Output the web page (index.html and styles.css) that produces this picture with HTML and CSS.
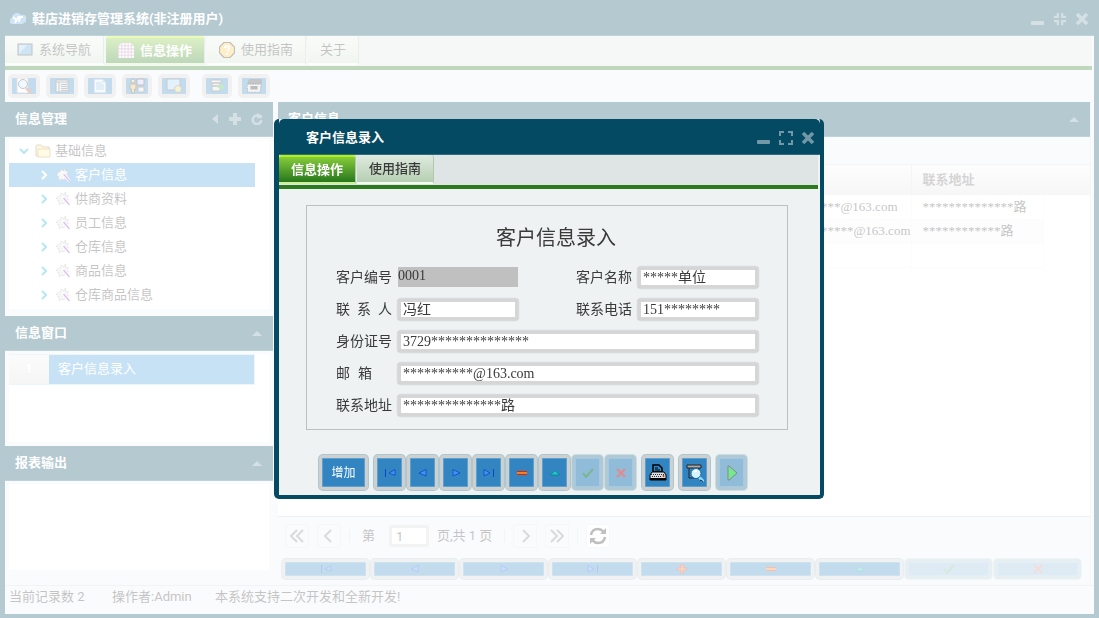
FILE: index.html
```html
<!DOCTYPE html>
<html lang="zh-CN">
<head>
    <meta charset="UTF-8">
    <meta name="viewport" content="width=device-width, initial-scale=1.0">
    <title>鞋店进销存管理系统</title>
    <link rel="stylesheet" href="styles.css">
</head>
<body>
    <!-- 图标 -->
    <svg class="sprite" aria-hidden="true">
        <symbol id="i-min" viewBox="0 0 14 14"><rect x="0" y="9" width="13" height="4" rx="1" fill="currentColor"/></symbol>
        <symbol id="i-max" viewBox="0 0 14 14"><path d="M1 5V1h4M9 1h4v4M13 9v4H9M5 13H1V9" fill="none" stroke="currentColor" stroke-width="2"/></symbol>
        <symbol id="i-restore" viewBox="0 0 16 16"><path d="M1 5.500H5.500V1M10.500 1v4.500H15M15 10.500h-4.500V15M5.500 15v-4.500H1" fill="none" stroke="currentColor" stroke-width="2.500"/></symbol>
        <symbol id="i-close" viewBox="0 0 14 14"><path d="M2 2l10 10M12 2L2 12" stroke="currentColor" stroke-width="3.500"/></symbol>
        <symbol id="i-up" viewBox="0 0 10 6"><path d="M0 6l5-5 5 5z" fill="currentColor"/></symbol>
        <symbol id="i-left" viewBox="0 0 7 12"><path d="M6 1v10L0 6z" fill="currentColor"/></symbol>
        <symbol id="i-plus" viewBox="0 0 12 12"><path d="M6 0v12M0 6h12" stroke="currentColor" stroke-width="4"/></symbol>
        <symbol id="i-reload" viewBox="0 0 14 14"><path d="M12 8A5 5 0 1 1 8 3" fill="none" stroke="currentColor" stroke-width="3"/><path d="M7 0l6 3v3H7z" fill="currentColor"/></symbol>
        <symbol id="i-chev" viewBox="0 0 6 10"><path d="M1 1l4 4-4 4" fill="none" stroke="currentColor" stroke-width="2"/></symbol>
        <symbol id="i-chevdown" viewBox="0 0 10 6"><path d="M1 1l4 4 4-4" fill="none" stroke="currentColor" stroke-width="2"/></symbol>
        <symbol id="i-folder" viewBox="0 0 16 14"><path d="M1 12V2l1-1h4l2 2h6v9z" fill="#fbe49a" stroke="#a98630"/><path d="M3 13V5h12v8z" fill="#fff0a8" stroke="#c19a3c"/></symbol>
        <symbol id="i-wand" viewBox="0 0 14 14"><path d="M0 6l4-3 1-2 2 2 2-3v3l3 1-2 2 2 2-2 1 2 2-3-1-2 2-2-1-2 2-1-4z" fill="#e4e4e4" stroke="#777" stroke-width=".7" stroke-dasharray="2 1"/><path d="M6 5l7 8" stroke="#fff" stroke-width="3"/><path d="M7 6l6 7" stroke="#9a32cc" stroke-width="1.500"/></symbol>
        <symbol id="i-logo" viewBox="0 0 16 12"><path d="M3 11a3 3 0 0 1-1-6 5 5 0 0 1 9-3 4 4 0 0 1 3 8q-2 2-5 1z" fill="#58a8dc"/><path d="M3 4l3 3M9 3L5 10M9 9l1-5h3" fill="none" stroke="#fff" stroke-width="1.800"/></symbol>
        <symbol id="i-screen" viewBox="0 0 16 14"><rect x="1" y="1" width="14" height="11" fill="#5ca8dc" stroke="#333"/><path d="M2 11V2h8z" fill="#9dd0f0"/></symbol>
        <symbol id="i-grid" viewBox="0 0 15 15"><path d="M3 0h9l3 3v11H0V3z" fill="#fff"/><path d="M.5 2v12M3.500 0v14M6.500 0v14M9.500 0v14M12.500 0v14M0 2.500h15M0 5.500h15M0 8.500h15M0 11.500h15" stroke="#b989b8"/></symbol>
        <symbol id="i-help" viewBox="0 0 16 16"><path d="M5 .5h6L15.500 5v6L11 15.500H5L.5 11V5z" fill="#ffc84c" stroke="#442208" stroke-width="1.200"/><path d="M6 6q0-2 2-2t2 2-2 3M8 11v2" fill="none" stroke="#fff" stroke-width="2"/></symbol>
        <symbol id="i-search" viewBox="0 0 16 16"><path d="M1 0h11v15H1z" fill="#fff" stroke="#999"/><circle cx="7" cy="6" r="4.500" fill="#c8ecff" stroke="#444"/><path d="M10 10l5 5" stroke="#c8552c" stroke-width="2.500"/></symbol>
        <symbol id="i-form" viewBox="0 0 16 16"><path d="M2 2h12v12H2z" fill="#d8e4ee" stroke="#555"/><path d="M2 4h12M5 4v10M7 6.500h6M7 8.500h6M7 10.500h6M7 12.500h6" stroke="#555"/></symbol>
        <symbol id="i-page" viewBox="0 0 16 16"><path d="M2 1h9l3 3v11H2z" fill="#e0f2ff" stroke="#5b88b0"/><path d="M4 5h6M4 7h8M4 9h8M4 11h8M11 1v3h3" fill="none" stroke="#5b9dc8"/></symbol>
        <symbol id="i-users" viewBox="0 0 16 16"><circle cx="4" cy="3" r="2" fill="#ffd07a" stroke="#333"/><path d="M1 6h6v5H5.500v4h-3v-4H1z" fill="#e8b050" stroke="#443"/><path d="M8 1h7v6H8z" fill="#ccc4ff" stroke="#333"/><path d="M9 9h6v5H9z" fill="#ddd" stroke="#555"/></symbol>
        <symbol id="i-drop" viewBox="0 0 16 16"><path d="M1 1h13v11H1z" fill="#9ed0ee" stroke="#555"/><circle cx="12" cy="11" r="3.500" fill="#c8e070" stroke="#a05a68"/></symbol>
        <symbol id="i-dbadd" viewBox="0 0 16 16"><path d="M2 2h10v3H2zM3 5h8v3H3zM3 8h8v5H3z" fill="#d8e0e4" stroke="#555"/><path d="M12 6v6M9 9h6" stroke="#3cb53c" stroke-width="2"/></symbol>
        <symbol id="i-print2" viewBox="0 0 18 16"><path d="M4 1h13v4H2z" fill="#444" stroke="#222"/><path d="M1 6h16l-1 9H2z" fill="#ddd" stroke="#222" stroke-dasharray="2 1"/><path d="M5 10h8" stroke="#222" stroke-width="4"/></symbol>
        <symbol id="n-first" viewBox="0 0 12 10"><path d="M1.500 1v8" stroke="#0d47c0"/><path d="M11 1.500v6L5 5z" fill="#3c94f8" stroke="#0d47c0" stroke-width=".8"/></symbol>
        <symbol id="n-prev" viewBox="0 0 12 10"><path d="M9 1.500v6.500L2 5z" fill="#3c94f8" stroke="#0d47c0" stroke-width=".8"/></symbol>
        <symbol id="n-next" viewBox="0 0 12 10"><path d="M3 1.500v6.500L10 5z" fill="#3c94f8" stroke="#0d47c0" stroke-width=".8"/></symbol>
        <symbol id="n-last" viewBox="0 0 12 10"><path d="M10.500 1v8" stroke="#0d47c0"/><path d="M1 1.500v6.500L7 5z" fill="#3c94f8" stroke="#0d47c0" stroke-width=".8"/></symbol>
        <symbol id="n-add" viewBox="0 0 12 10"><path d="M6 0v10M1 5h10" stroke="#e02a00" stroke-width="3"/><path d="M6 1v8M2 5h8" stroke="#ff8a50"/></symbol>
        <symbol id="n-del" viewBox="0 0 12 10"><path d="M1 3.500h10M1 6.500h10" stroke="#d42a00"/><path d="M1 5h10" stroke="#ff7a20" stroke-width="2"/></symbol>
        <symbol id="n-edit" viewBox="0 0 12 10"><path d="M1.500 7L6 2.500 10.500 7z" fill="#28c8d0" stroke="#078a96"/></symbol>
        <symbol id="n-ok" viewBox="0 0 12 10"><path d="M1 5l3 4 7-8" fill="none" stroke="#087a28" stroke-width="2"/></symbol>
        <symbol id="n-cancel" viewBox="0 0 12 10"><path d="M2 1l8 8M10 1L2 9" stroke="#dc2020" stroke-width="2"/></symbol>
        <symbol id="i-printer" viewBox="0 0 18 18"><path d="M4 8V1h6l3 3v4z" fill="#3285c1" stroke="#000" stroke-width="1.500"/><path d="M6 4h3M6 6h5" stroke="#000"/><path d="M3 8h12l2 3v5H1v-5z" fill="#ddd" stroke="#000"/><path d="M2 10.500h14M3 12.500h10" stroke="#234" stroke-dasharray="1 1"/><path d="M1 15h16" stroke="#000" stroke-width="2"/><circle cx="14.500" cy="12" r="1" fill="#e02020"/></symbol>
        <symbol id="i-preview" viewBox="0 0 18 18"><path d="M1 1h14v3H1z" fill="#aaa" stroke="#222"/><path d="M3 4v10h9M13 4v2" fill="none" stroke="#222"/><circle cx="10" cy="9.500" r="5" fill="#d4f4ff" stroke="#1c6ca8"/><path d="M8 8l3-2" stroke="#fff" stroke-width="2"/><path d="M13.500 13.500l4 4" stroke="#8edcff" stroke-width="3"/><path d="M14 16l3 1.500" stroke="#113"/></symbol>
        <symbol id="i-play" viewBox="0 0 18 18"><path d="M5 2v14h1l8-7-8-7z" fill="#00e020" stroke="#123"/></symbol>
        <symbol id="p-one" viewBox="0 0 14 14"><path d="M9 1L3 7l6 6" fill="none" stroke="currentColor" stroke-width="2"/></symbol>
        <symbol id="p-two" viewBox="0 0 14 14"><path d="M7 1L1 7l6 6M13 1L7 7l6 6" fill="none" stroke="currentColor" stroke-width="2"/></symbol>
        <symbol id="p-refresh" viewBox="0 0 18 18"><path d="M2 8q1-6 7-6 3 0 6 3M16 10q-1 6-7 6-3 0-6-3" fill="none" stroke="currentColor" stroke-width="2.500"/><path d="M17 1v6h-6zM1 17v-6h6z" fill="currentColor"/></symbol>
    </svg>

    <div class="window main-window">
        <header class="window-header">
            <svg class="logo"><use href="#i-logo"/></svg>
            <h1>鞋店进销存管理系统(非注册用户)</h1>
            <div class="window-tools">
                <button aria-label="最小化"><svg><use href="#i-min"/></svg></button>
                <button aria-label="还原"><svg><use href="#i-restore"/></svg></button>
                <button aria-label="关闭"><svg><use href="#i-close"/></svg></button>
            </div>
        </header>
        <nav class="tabs">
            <button class="tab"><svg><use href="#i-screen"/></svg>系统导航</button>
            <button class="tab active"><svg><use href="#i-grid"/></svg>信息操作</button>
            <button class="tab"><svg><use href="#i-help"/></svg>使用指南</button>
            <button class="tab">关于</button>
        </nav>
        <div class="toolbar">
            <button class="btn" aria-label="查询"><svg><use href="#i-search"/></svg></button>
            <button class="btn" aria-label="表单"><svg><use href="#i-form"/></svg></button>
            <button class="btn" aria-label="页面"><svg><use href="#i-page"/></svg></button>
            <button class="btn narrow" aria-label="用户"><svg><use href="#i-users"/></svg></button>
            <button class="btn" aria-label="界面"><svg><use href="#i-drop"/></svg></button>
            <button class="btn narrow group" aria-label="数据"><svg><use href="#i-dbadd"/></svg></button>
            <button class="btn" aria-label="打印"><svg><use href="#i-print2"/></svg></button>
        </div>

        <div class="layout">
            <aside class="sidebar">
                <section class="panel tree-panel">
                    <div class="panel-header">
                        <h2>信息管理</h2>
                        <div class="panel-tools">
                            <svg class="t-left"><use href="#i-left"/></svg>
                            <svg><use href="#i-plus"/></svg>
                            <svg><use href="#i-reload"/></svg>
                        </div>
                    </div>
                    <ul class="tree">
                        <li class="root"><svg class="arrow"><use href="#i-chevdown"/></svg><svg class="node"><use href="#i-folder"/></svg>基础信息</li>
                        <li class="selected"><svg class="arrow"><use href="#i-chev"/></svg><svg class="node"><use href="#i-wand"/></svg>客户信息</li>
                        <li><svg class="arrow"><use href="#i-chev"/></svg><svg class="node"><use href="#i-wand"/></svg>供商资料</li>
                        <li><svg class="arrow"><use href="#i-chev"/></svg><svg class="node"><use href="#i-wand"/></svg>员工信息</li>
                        <li><svg class="arrow"><use href="#i-chev"/></svg><svg class="node"><use href="#i-wand"/></svg>仓库信息</li>
                        <li><svg class="arrow"><use href="#i-chev"/></svg><svg class="node"><use href="#i-wand"/></svg>商品信息</li>
                        <li><svg class="arrow"><use href="#i-chev"/></svg><svg class="node"><use href="#i-wand"/></svg>仓库商品信息</li>
                    </ul>
                </section>
                <section class="panel list-panel">
                    <div class="panel-header">
                        <h2>信息窗口</h2>
                        <svg class="t-up"><use href="#i-up"/></svg>
                    </div>
                    <div class="panel-body">
                        <div class="open-item"><span class="num">1</span><span class="name">客户信息录入</span></div>
                    </div>
                </section>
                <section class="panel report-panel">
                    <div class="panel-header">
                        <h2>报表输出</h2>
                        <svg class="t-up"><use href="#i-up"/></svg>
                    </div>
                    <div class="panel-body"></div>
                </section>
            </aside>

            <main class="content">
                <div class="panel-header">
                    <h2>客户信息</h2>
                    <svg class="t-up"><use href="#i-up"/></svg>
                </div>
                <div class="grid-area">
                    <table>
                        <thead>
                            <tr><th class="c-main"></th><th class="c-mail"></th><th class="c-addr" colspan="2">联系地址</th></tr>
                        </thead>
                        <tbody>
                            <tr><td></td><td>**********@163.com</td><td class="addr">**************路</td><td class="rest"></td></tr>
                            <tr><td></td><td>************@163.com</td><td class="addr">************路</td><td class="rest"></td></tr>
                            <tr><td></td><td></td><td class="addr"></td><td class="rest"></td></tr>
                        </tbody>
                    </table>
                </div>
                <div class="pager">
                    <button aria-label="首页"><svg><use href="#p-two"/></svg></button>
                    <button aria-label="上一页"><svg><use href="#p-one"/></svg></button>
                    <i class="sep"></i>
                    <label for="page">第</label>
                    <input id="page" type="text" value="1">
                    <span class="total">页,共 1 页</span>
                    <i class="sep"></i>
                    <button class="flip" aria-label="下一页"><svg><use href="#p-one"/></svg></button>
                    <button class="flip" aria-label="末页"><svg><use href="#p-two"/></svg></button>
                    <i class="sep"></i>
                    <button class="refresh" aria-label="刷新"><svg><use href="#p-refresh"/></svg></button>
                </div>
                <div class="record-bar">
                    <button class="btn" aria-label="首条"><svg><use href="#n-first"/></svg></button>
                    <button class="btn" aria-label="上一条"><svg><use href="#n-prev"/></svg></button>
                    <button class="btn" aria-label="下一条"><svg><use href="#n-next"/></svg></button>
                    <button class="btn" aria-label="末条"><svg><use href="#n-last"/></svg></button>
                    <button class="btn" aria-label="增加"><svg><use href="#n-add"/></svg></button>
                    <button class="btn" aria-label="删除"><svg><use href="#n-del"/></svg></button>
                    <button class="btn" aria-label="修改"><svg><use href="#n-edit"/></svg></button>
                    <button class="btn" aria-label="保存" disabled><svg><use href="#n-ok"/></svg></button>
                    <button class="btn" aria-label="取消" disabled><svg><use href="#n-cancel"/></svg></button>
                </div>
            </main>
        </div>

        <footer class="status">
            <span class="count">当前记录数 2</span>
            <span class="user">操作者:Admin</span>
            <span>本系统支持二次开发和全新开发!</span>
        </footer>
    </div>

    <div class="mask">
        <div class="window dialog" role="dialog" aria-labelledby="dialogTitle">
            <header class="window-header">
                <h2 id="dialogTitle">客户信息录入</h2>
                <div class="window-tools">
                    <button aria-label="最小化"><svg><use href="#i-min"/></svg></button>
                    <button aria-label="最大化"><svg><use href="#i-max"/></svg></button>
                    <button aria-label="关闭"><svg><use href="#i-close"/></svg></button>
                </div>
            </header>
            <nav class="tabs">
                <button class="tab active">信息操作</button>
                <button class="tab">使用指南</button>
            </nav>
            <form class="entry">
                <h3>客户信息录入</h3>
                <div class="fields">
                    <label for="code">客户编号</label>
                    <input id="code" type="text" value="0001" readonly>
                    <label for="name" class="second">客户名称</label>
                    <input id="name" type="text" value="*****单位">
                    <label for="contact" class="spread"><span>联</span><span>系</span><span>人</span></label>
                    <input id="contact" type="text" value="冯红">
                    <label for="phone" class="second">联系电话</label>
                    <input id="phone" type="text" value="151********">
                    <label for="idno">身份证号</label>
                    <input id="idno" class="wide" type="text" value="3729**************">
                    <label for="mail" class="pair"><span>邮</span><span>箱</span></label>
                    <input id="mail" class="wide" type="text" value="**********@163.com">
                    <label for="address">联系地址</label>
                    <input id="address" class="wide" type="text" value="**************路">
                </div>
            </form>
            <div class="actions">
                <button class="btn text">增加</button>
                <div class="nav-group">
                    <button class="btn" aria-label="首条"><svg><use href="#n-first"/></svg></button>
                    <button class="btn" aria-label="上一条"><svg><use href="#n-prev"/></svg></button>
                    <button class="btn" aria-label="下一条"><svg><use href="#n-next"/></svg></button>
                    <button class="btn" aria-label="末条"><svg><use href="#n-last"/></svg></button>
                    <button class="btn" aria-label="删除"><svg><use href="#n-del"/></svg></button>
                    <button class="btn" aria-label="修改"><svg><use href="#n-edit"/></svg></button>
                    <button class="btn" aria-label="保存" disabled><svg><use href="#n-ok"/></svg></button>
                    <button class="btn" aria-label="取消" disabled><svg><use href="#n-cancel"/></svg></button>
                </div>
                <button class="btn big" aria-label="打印"><svg><use href="#i-printer"/></svg></button>
                <button class="btn big" aria-label="预览"><svg><use href="#i-preview"/></svg></button>
                <button class="btn big" aria-label="执行" disabled><svg><use href="#i-play"/></svg></button>
            </div>
        </div>
    </div>
</body>
</html>
```
FILE: styles.css
```css
* {
    margin: 0;
    padding: 0;
    box-sizing: border-box;
}

body {
    font-family: Roboto, "Noto Sans CJK SC", sans-serif;
    font-size: 13px;
    line-height: 20px;
    color: #3a3a3a;
    background: #eef2f3;
}

button,
input {
    font: inherit;
    color: inherit;
}

button {
    border: none;
    background: none;
}

.sprite {
    position: absolute;
    width: 0;
    height: 0;
}

/* 窗口 */
.window {
    display: flex;
    flex-direction: column;
    background: #eef2f3;
    border: 5px solid #044a63;
    border-top: none;
}

.main-window {
    min-height: 100vh;
    border-bottom-width: 4px;
}

.window-header {
    display: flex;
    align-items: center;
    height: 36px;
    padding: 2px 2px 0 5px;
    background: #044a63;
    border-bottom: 1px solid #2d6c82;
    color: #fff;
}

.window-header h1,
.window-header h2 {
    font-size: 13px;
    font-weight: bold;
}

.logo {
    width: 16px;
    height: 12px;
    margin-right: 6px;
}

.window-tools {
    display: flex;
    gap: 8px;
    margin-left: auto;
    padding-right: 3px;
    color: #7297a7;
}

.window-tools button,
.window-tools svg {
    display: block;
    width: 14px;
    height: 14px;
}

/* 标签页 */
.tabs {
    display: flex;
    gap: 2px;
    height: 34px;
    margin-right: 2px;
    background: #dfe4e4;
    border-bottom: 4px solid #2b7a1e;
}

.tab {
    display: flex;
    align-items: center;
    height: 29px;
    padding: 0 12px;
    background: linear-gradient(#e0eadf, #b5cfb3);
    border-right: 1px solid #b0c8b0;
    border-bottom: 2px solid #f4faf2;
    border-radius: 3px 3px 0 0;
}

.tab svg {
    width: 16px;
    height: 16px;
    margin-right: 6px;
}

.tab.active {
    color: #fff;
    font-weight: bold;
    background: linear-gradient(#86cc3c, #27771c);
    border-top: 2px solid #b4f010;
    border-bottom-color: #d0f0a0;
}

.main-window .tab:not(.active) {
    background: linear-gradient(#eef3ec, #d0e0ce);
}

.dialog .tabs {
    gap: 1px;
}

.dialog .tab:not(.active) {
    font-weight: 500;
}

/* 按钮 */
.btn {
    display: flex;
    align-items: center;
    justify-content: center;
    background: #3285c1;
    border: 3px solid #cfcfcf;
    border-radius: 4px;
    box-shadow: 0 0 0 1px #a9c8d2, inset 0 0 0 1px #58a2d2;
}

.btn svg {
    width: 12px;
    height: 10px;
}

.btn:disabled {
    opacity: 0.5;
    border-color: #72a0b8;
}

.toolbar {
    display: flex;
    gap: 8px;
    padding: 5px 4px 5px;
}

.toolbar .btn {
    width: 30px;
    height: 22px;
    box-shadow: 0 0 0 1px #cfcfcf;
}

.toolbar .narrow {
    width: 28px;
}

.toolbar .group {
    margin-left: 6px;
}

.toolbar svg {
    flex: none;
    width: 16px;
    height: 16px;
}

/* 主体布局 */
.layout {
    display: flex;
    flex: 1;
    gap: 5px;
    padding-right: 3px;
    border-bottom: 1px solid #d4d8d9;
}

.sidebar {
    display: flex;
    flex-direction: column;
    width: 268px;
}

.panel-header {
    display: flex;
    align-items: center;
    justify-content: space-between;
    height: 35px;
    padding: 0 10px;
    background: #044a63;
    border-bottom: 1px solid #2d6c82;
    color: #fff;
}

.panel-header h2 {
    font-size: 13px;
    font-weight: bold;
}

.panel-tools {
    display: flex;
    align-items: center;
    gap: 10px;
    color: #7297a7;
}

.panel-tools svg {
    width: 12px;
    height: 12px;
}

.panel-tools .t-left {
    width: 7px;
}

.t-up {
    width: 10px;
    height: 6px;
    margin-right: 1px;
    color: #7297a7;
}

.tree {
    list-style: none;
    margin: 2px 4px 7px;
    padding-bottom: 2px;
    background: #fff;
}

.tree li {
    display: flex;
    align-items: center;
    height: 24px;
    margin-right: 14px;
    padding-left: 32px;
}

.tree .root {
    padding-left: 10px;
}

.tree .arrow {
    width: 6px;
    height: 10px;
    margin-right: 9px;
    color: #08b0e0;
}

.tree .root .arrow {
    width: 10px;
    height: 6px;
    margin-right: 6px;
}

.tree .node {
    width: 15px;
    height: 14px;
    margin-right: 4px;
}

.tree .root .node {
    width: 16px;
}

.tree .selected,
.tree .selected .arrow {
    color: #fff;
}

.tree .selected {
    background: #449ede;
}

.panel-body {
    margin: 3px 4px 4px;
    background: #fff;
}

.list-panel .panel-body {
    height: 88px;
}

.report-panel {
    display: flex;
    flex: 1;
    flex-direction: column;
}

.report-panel .panel-body {
    flex: 1;
    margin-bottom: 15px;
}

.open-item {
    display: flex;
    height: 31px;
    margin-right: 14px;
    line-height: 28px;
    color: #fff;
    background: #449ede;
    border: solid #c0e0f0;
    border-width: 1px 1px 1px 0;
}

.open-item .num {
    width: 40px;
    text-align: center;
    font-weight: bold;
    background: linear-gradient(#f2f2f2, #dedede);
}

.open-item .name {
    padding-left: 9px;
}

/* 数据表 */
.content {
    display: flex;
    flex: 1;
    flex-direction: column;
    min-width: 0;
    border-right: 1px solid #dde2e2;
}

.grid-area {
    flex: 1;
    margin-top: 27px;
    background: #fff;
    border-top: 1px solid #dcdcdc;
    border-bottom: 1px solid #ccd2d2;
}

table {
    width: 100%;
    border-collapse: collapse;
    font-family: "Liberation Serif", "Noto Sans CJK SC", serif;
}

th {
    height: 30px;
    padding-left: 11px;
    text-align: left;
    color: #707070;
    background: linear-gradient(#f8f8f8, #e2e2e2);
    border-right: 1px solid #dcdcdc;
}

th:last-child {
    border-right: none;
}

td {
    height: 24px;
    padding-left: 11px;
    line-height: 16px;
    white-space: nowrap;
    border-right: 1px solid #f6f6f6;
    border-bottom: 1px solid #f4f4f4;
}

tbody tr:nth-child(2) td {
    background: #f8f8f8;
}

tbody tr td.rest {
    width: 47px;
    background: #fff;
    border: none;
}

.c-mail {
    width: 146px;
}

.addr {
    width: 132px;
}

.pager {
    display: flex;
    align-items: center;
    height: 38px;
    padding-left: 7px;
    gap: 8px;
}

.pager button {
    display: flex;
    align-items: center;
    justify-content: center;
    width: 24px;
    height: 24px;
    color: #848484;
    border: 1px solid #e2e6e6;
    border-radius: 3px;
}

.pager svg {
    width: 14px;
    height: 14px;
}

.pager .flip svg {
    transform: rotate(180deg);
}

.pager .refresh {
    color: #2c2c2c;
    background: #fff;
}

.pager .refresh svg {
    width: 18px;
    height: 18px;
}

.sep {
    width: 1px;
    height: 14px;
    background: #d8dcdc;
}

.pager label {
    margin: 0 6px 0 4px;
}

.pager input {
    width: 40px;
    height: 22px;
    padding-left: 4px;
    background: #fff;
    border: 3px solid #d6d6d6;
    border-radius: 3px;
}

.pager .total {
    margin-right: 4px;
}

.record-bar {
    display: flex;
    gap: 2px;
    padding: 4px 9px 6px 4px;
}

.record-bar .btn {
    flex: 1;
    height: 20px;
}

.status {
    display: flex;
    height: 28px;
    padding: 1px 4px;
}

.status .count {
    width: 103px;
}

.status .user {
    width: 103px;
}

/* 弹出窗口 */
.mask {
    position: fixed;
    inset: 0;
    display: flex;
    align-items: center;
    justify-content: center;
    padding-right: 1px;
    background: rgba(255, 255, 255, 0.7);
}

.dialog {
    width: 550px;
    max-width: 100%;
    border-right-width: 4px;
    border-bottom-width: 4px;
    border-radius: 5px;
    background-clip: padding-box;
    overflow: hidden;
}

.dialog .window-header {
    padding-left: 27px;
    border-radius: 5px 5px 0 0;
}

.entry {
    margin: 16px 32px 0 27px;
    padding: 20px 11px 12px 29px;
    border: 1px solid #bcc0c1;
}

.entry h3 {
    margin-bottom: 17px;
    font-size: 20px;
    font-weight: normal;
    line-height: 24px;
    text-align: center;
}

.fields {
    display: grid;
    grid-template-columns: 62px 120px 120px 120px;
    row-gap: 10px;
    font-family: "Liberation Serif", "Noto Sans CJK SC", serif;
    font-size: 14px;
    line-height: 22px;
}

.fields .second {
    padding-left: 58px;
}

.spread,
.pair {
    display: flex;
    justify-content: space-between;
    width: 56px;
}

.pair {
    width: 36px;
}

.fields input {
    width: 100%;
    height: 21px;
    padding: 0 2px;
    background: #fff;
    border: 3px solid #d6d6d6;
    border-radius: 2px;
    box-shadow: 0 0 2px #999;
}

.fields input[readonly] {
    height: 20px;
    padding: 0 0 2px;
    background: #c0c0c0;
    border: none;
    border-radius: 0;
    box-shadow: none;
}

.fields .wide {
    grid-column: 2 / -1;
}

.actions {
    display: flex;
    gap: 6px;
    padding: 25px 0 5px 40px;
}

.actions .btn {
    width: 31px;
    height: 35px;
}

.actions .text {
    width: 49px;
    font-size: 12px;
    color: #fff;
}

.nav-group {
    display: flex;
    gap: 2px;
}

.actions .big svg {
    flex: none;
    width: 18px;
    height: 18px;
}
```
